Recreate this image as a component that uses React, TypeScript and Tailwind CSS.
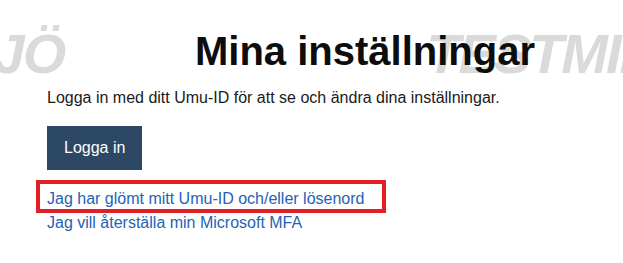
import React from 'react'

const font = { fontFamily: '"Liberation Sans", Arial, sans-serif' }

// Faint "TESTMILJÖ" stamp that sits behind the page content
function Watermark() {
  return (
    <div className="pointer-events-none absolute inset-0 overflow-hidden select-none" aria-hidden>
      <div className="absolute left-[-232px] top-[26px] flex gap-[362px] whitespace-nowrap text-[56px] font-bold italic leading-none tracking-[-2px] text-[#dadada]">
        <span>TESTMILJÖ</span>
        <span>TESTMILJÖ</span>
      </div>
    </div>
  )
}

export default function App() {
  return (
    <div className="relative h-[263px] w-full overflow-hidden bg-white" style={font}>
      <Watermark />

      <div className="relative px-[47px] pt-[27px] text-[16px] leading-[24px] text-[#1a1a1a]">
        {/* Page heading */}
        <h1 className="pl-[148px] text-[40px] font-bold leading-[48px] text-[#0d0d0d]">
          Mina inställningar
        </h1>

        <p className="mt-[11px]">Logga in med ditt Umu-ID för att se och ändra dina inställningar.</p>

        <button className="mt-[16px] flex h-[44px] items-center bg-[#2c4865] px-[17px] text-[16px] text-white">
          Logga in
        </button>

        {/* Help links */}
        <div className="mt-[17px] flex flex-col items-start">
          <div className="relative">
            <a href="#" className="text-[#2463b3]">
              Jag har glömt mitt Umu-ID och/eller lösenord
            </a>
            <span className="absolute left-[-11px] top-[-7px] h-[33px] w-[350px] border-4 border-[#e41e26]" />
          </div>
          <a href="#" className="text-[#2463b3]">
            Jag vill återställa min Microsoft MFA
          </a>
        </div>
      </div>
    </div>
  )
}
